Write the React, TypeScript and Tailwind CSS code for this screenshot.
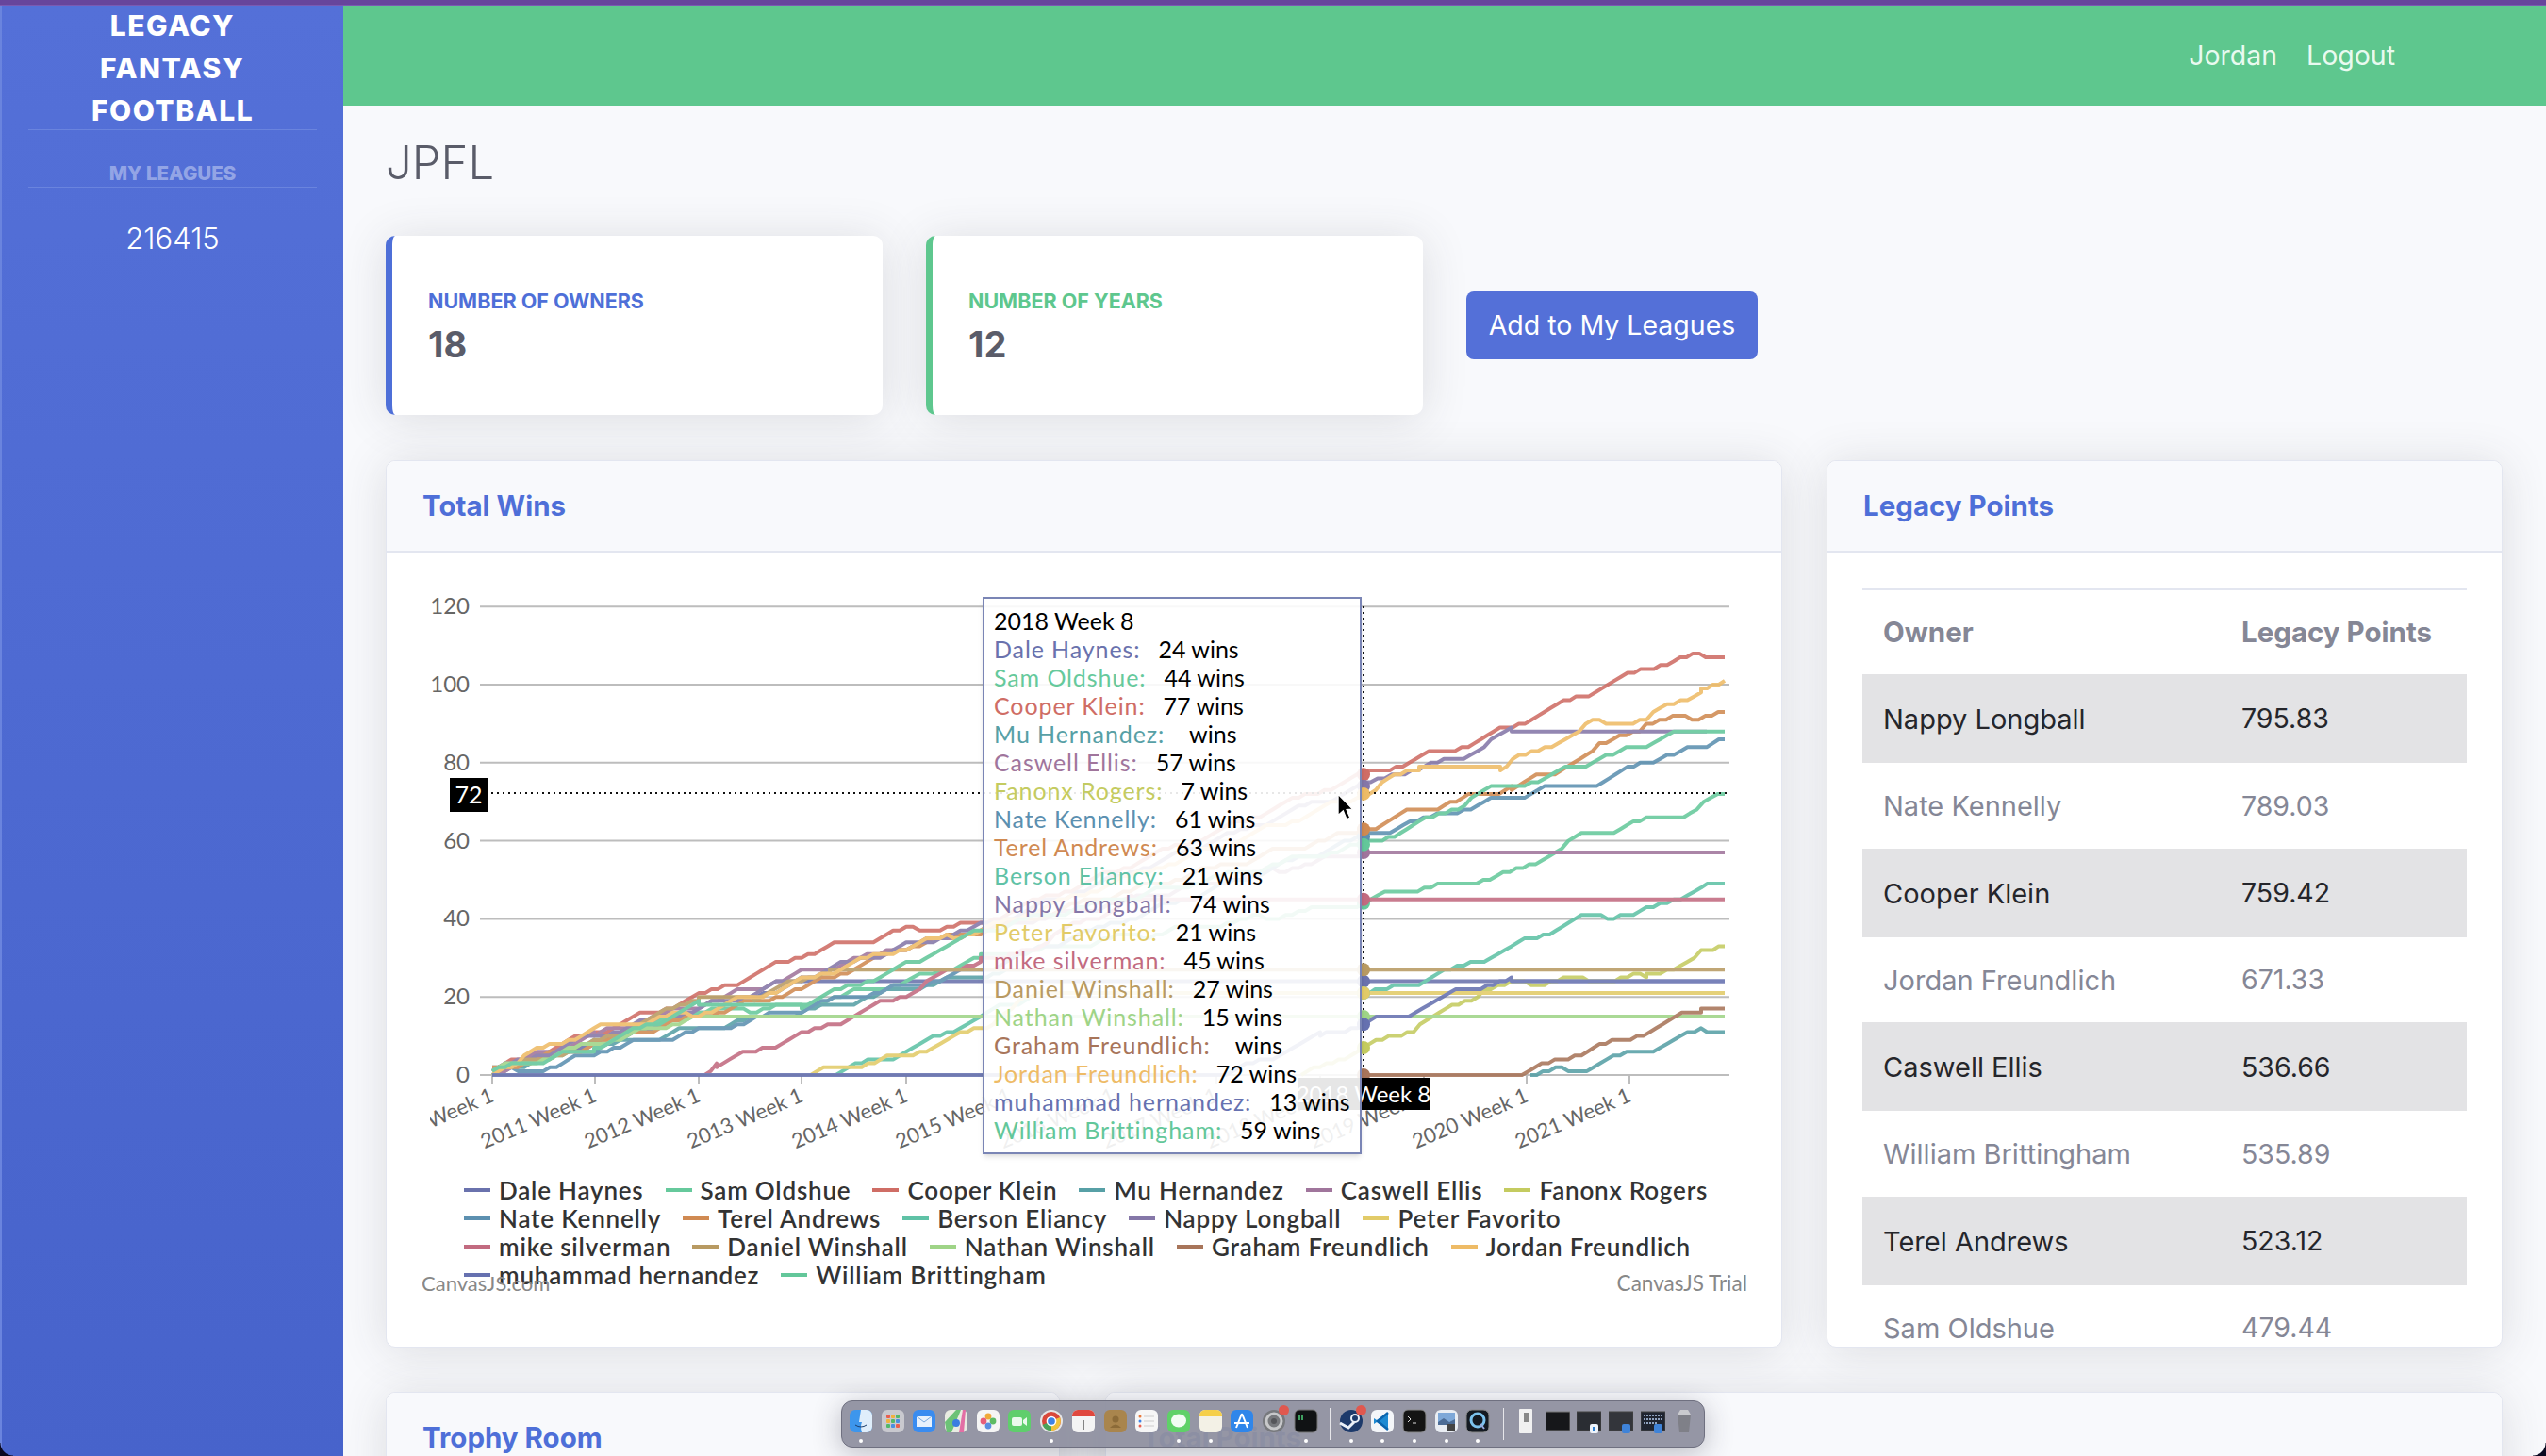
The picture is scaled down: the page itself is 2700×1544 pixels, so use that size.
import { FC, ReactNode } from "react";

type Series = {
  name: string;
  color: string;
  wins: string;
  points: [number, number][];
};

const series: Series[] = [
  { name: "Dale Haynes", color: "#6a72ad", wins: "24", points: [[522, 1], [630, 8], [741, 16], [850, 24], [1829, 24]] },
  { name: "Sam Oldshue", color: "#66c99c", wins: "44", points: [[522, 1], [630, 8], [741, 16], [850, 18], [961, 24], [1040, 30], [1446, 44], [1476, 47], [1545, 49], [1608, 52], [1677, 61], [1746, 65], [1792, 67], [1829, 72]] },
  { name: "Cooper Klein", color: "#cf6d65", wins: "77", points: [[522, 1], [630, 11], [741, 20], [850, 31], [961, 37], [1040, 39], [1446, 77], [1557, 85], [1631, 92], [1712, 101], [1775, 106.5], [1829, 107.5]] },
  { name: "Mu Hernandez", color: "#57a0a6", wins: "", points: [[522, 1], [630, 7], [741, 12], [850, 16], [961, 22], [1040, 26], [1100, 27]] },
  { name: "Caswell Ellis", color: "#a0759c", wins: "57", points: [[522, 1], [630, 10], [741, 18], [850, 26], [961, 33], [1040, 37], [1446, 57], [1829, 57]] },
  { name: "Fanonx Rogers", color: "#c4cb60", wins: "7", points: [[1380, 0], [1446, 7], [1499, 12], [1574, 22], [1631, 24], [1746, 25], [1804, 31], [1829, 33]] },
  { name: "Nate Kennelly", color: "#5c90b0", wins: "61", points: [[522, 1], [590, 2], [630, 6], [741, 11], [850, 17], [961, 23], [1040, 27], [1446, 61], [1488, 64], [1574, 69.5], [1631, 73], [1700, 75], [1746, 80.6], [1804, 84], [1829, 87]] },
  { name: "Terel Andrews", color: "#d08a52", wins: "63", points: [[522, 1], [630, 8], [741, 15], [850, 22], [961, 33], [1040, 37], [1446, 63], [1505, 68], [1551, 70.5], [1603, 74], [1649, 77.5], [1689, 83], [1746, 90], [1829, 93]] },
  { name: "Berson Eliancy", color: "#5fc2a6", wins: "21", points: [[873, 0], [961, 6], [1040, 15], [1100, 21], [1446, 21], [1471, 21.7], [1545, 27], [1603, 33], [1677, 40], [1746, 42], [1804, 48], [1829, 49]] },
  { name: "Nappy Longball", color: "#8577a8", wins: "74", points: [[522, 1], [630, 10], [741, 17], [850, 25], [961, 33], [1040, 38], [1446, 74], [1476, 77], [1545, 81], [1603, 88], [1810, 88]] },
  { name: "Peter Favorito", color: "#e2cb68", wins: "21", points: [[853, 0], [961, 5], [1040, 12], [1100, 21], [1829, 21]] },
  { name: "mike silverman", color: "#c26b80", wins: "45", points: [[741, 0], [760, 3], [850, 10], [961, 21], [1040, 30], [1070, 30], [1200, 45], [1829, 45]] },
  { name: "Daniel Winshall", color: "#b89a62", wins: "27", points: [[522, 1], [630, 8], [741, 20], [800, 20], [850, 24], [880, 27], [1829, 27]] },
  { name: "Nathan Winshall", color: "#9fd487", wins: "15", points: [[522, 1], [630, 8], [741, 15], [1829, 15]] },
  { name: "Graham Freundlich", color: "#a8755a", wins: "", points: [[1446, 0], [1614, 0], [1677, 6], [1729, 9.5], [1804, 17], [1829, 17]] },
  { name: "Jordan Freundlich", color: "#eebb66", wins: "72", points: [[522, 1], [630, 12], [741, 16], [850, 24], [961, 33], [1040, 37], [1446, 72], [1505, 79], [1591, 79], [1631, 83], [1689, 90], [1746, 91], [1804, 99], [1829, 100]] },
  { name: "muhammad hernandez", color: "#6671b0", wins: "13", points: [[522, 0], [1300, 0], [1400, 10], [1446, 13], [1494, 16], [1551, 22], [1603, 24], [1829, 24]] },
  { name: "William Brittingham", color: "#63c79a", wins: "59", points: [[522, 1], [630, 7], [741, 18], [850, 18], [961, 28], [1040, 37], [1446, 59], [1505, 64], [1574, 72.5], [1631, 75.5], [1689, 80.5], [1746, 84.7], [1775, 88], [1829, 88]] },
];

const muTail: [number, number][] = [[1623, 0], [1683, 2], [1746, 6.5], [1804, 11.5], [1829, 12]];

const legendRows = [series.slice(0, 6), series.slice(6, 11), series.slice(11, 16), series.slice(16)];

const yFor = (v: number) => 1140 - v * 4.14;

const stairs = (points: [number, number][], seed: number) => {
  const out: string[] = [];
  for (let i = 0; i < points.length - 1; i++) {
    const [x0, v0] = points[i];
    const [x1, v1] = points[i + 1];
    const steps = Math.max(1, Math.round((x1 - x0) / 6.9));
    for (let s = 0; s <= steps; s++) {
      const t = s / steps;
      const noise = v0 === v1 ? 0 : Math.sin((x0 + s * 6.9) * 0.09 + seed) * 0.7;
      const v = Math.max(0, Math.round(v0 + (v1 - v0) * t + noise));
      out.push(`${(x0 + (x1 - x0) * t).toFixed(1)},${yFor(v).toFixed(1)}`);
    }
  }
  return out.join(" ");
};

const yTicks = [0, 20, 40, 60, 80, 100, 120];
const xTicks = [
  [522, "2010 Week 1"],
  [631, "2011 Week 1"],
  [741, "2012 Week 1"],
  [850, "2013 Week 1"],
  [961, "2014 Week 1"],
  [1071, "2015 Week 1"],
  [1181, "2016 Week 1"],
  [1290, "2017 Week 1"],
  [1400, "2018 Week 1"],
  [1510, "2019 Week 1"],
  [1619, "2020 Week 1"],
  [1728, "2021 Week 1"],
] as const;

const WinsChart = () => (
  <svg viewBox="410 586 1479 661" className="block h-[661px] w-full font-['Lato',sans-serif]">
    <defs>
      <clipPath id="tick-clip">
        <rect x="456" y="1140" width="1400" height="110" />
      </clipPath>
    </defs>
    {yTicks.map((t) => (
      <g key={t}>
        <line x1="509" x2="1834" y1={yFor(t)} y2={yFor(t)} stroke="#bdbdbd" strokeWidth="2" />
        <text x="498" y={yFor(t) + 8} textAnchor="end" fontSize="24" fill="#666">
          {t}
        </text>
      </g>
    ))}
    <g clipPath="url(#tick-clip)">
      {xTicks.map(([x, label]) => (
        <g key={label}>
          <line x1={x} x2={x} y1="1140" y2="1149" stroke="#bdbdbd" strokeWidth="2" />
          <text x={x} y="1168" textAnchor="end" fontSize="22" fill="#666" transform={`rotate(-23 ${x} 1160)`}>
            {label}
          </text>
        </g>
      ))}
    </g>
    <g fill="none" strokeWidth="4" strokeLinejoin="round" opacity="0.88">
      {series.map((s, i) => (
        <polyline key={s.name} points={stairs(s.points, i * 1.7)} stroke={s.color} />
      ))}
      <polyline points={stairs(muTail, 4)} stroke="#57a0a6" />
    </g>
    <line x1="509" x2="1834" y1="841" y2="841" stroke="#111" strokeWidth="2" strokeDasharray="2 4" />
    <line x1="1446" x2="1446" y1="643" y2="1142" stroke="#111" strokeWidth="2" strokeDasharray="2 4" />
    {series
      .filter((s) => s.wins !== "")
      .map((s) => (
        <circle key={s.name} cx="1446" cy={yFor(Number(s.wins))} r="7" fill={s.color} />
      ))}
    <circle cx="1446" cy="1140" r="7" fill="#a8755a" />
    <rect x="477" y="825" width="40" height="36" fill="#000" />
    <text x="497" y="852" textAnchor="middle" fontSize="25" fill="#fff">
      72
    </text>
    <rect x="1376" y="1143" width="141" height="34" fill="#000" />
    <text x="1446" y="1169" textAnchor="middle" fontSize="24" fill="#fff">
      2018 Week 8
    </text>
  </svg>
);

const ChartTooltip = () => (
  <div className="absolute left-[632px] top-[47px] h-[591px] w-[402px] border-2 border-[#7a85b5] bg-white/90 pl-[10px] pt-[8px] font-['Lato',sans-serif] text-[25px] leading-[30px] text-black shadow-md">
    <div>2018 Week 8</div>
    {series.map((s) => (
      <div key={s.name} className="whitespace-pre">
        <span className="tracking-[0.9px]" style={{ color: s.color }}>
          {s.name}:
        </span>
        <span className={s.wins ? "ml-[19px]" : "ml-[26px]"}>{s.wins ? `${s.wins} wins` : "wins"}</span>
      </div>
    ))}
  </div>
);

const Cursor = () => (
  <svg viewBox="0 0 16 28" className="absolute left-[1008px] top-[255px] h-[30px] w-[17px]">
    <path d="M1 1 L1 22 L6 17.5 L9.5 26 L13 24.5 L9.5 16.5 L15.5 16 Z" fill="#000" stroke="#fff" strokeWidth="1.2" />
  </svg>
);

const Card: FC<{ title: string; className: string; children?: ReactNode }> = ({ title, className, children }) => (
  <div className={`overflow-hidden rounded-[10px] border border-[#e3e6f0] bg-white shadow-[0_4px_48px_rgba(58,59,69,0.15)] ${className}`}>
    <div className="flex h-[97px] items-center border-b-2 border-[#e3e6f0] bg-[#f8f9fc] px-[38px]">
      <h6 className="text-[29.5px] font-bold text-[#4e6fd8]">{title}</h6>
    </div>
    {children}
  </div>
);

const StatCard: FC<{ label: string; value: string; border: string; text: string }> = ({ label, value, border, text }) => (
  <div className={`flex h-[190px] w-[527px] flex-col justify-center rounded-[10px] border-l-[7px] bg-white pl-[38px] pt-[5px] shadow-[0_4px_48px_rgba(58,59,69,0.15)] ${border}`}>
    <div className={`text-[21.5px] font-bold uppercase leading-[28px] ${text}`}>{label}</div>
    <div className="mt-[7px] text-[38px] font-bold leading-[50px] text-[#5a5c69]">{value}</div>
  </div>
);

const legacyPoints = [
  ["Nappy Longball", "795.83"],
  ["Nate Kennelly", "789.03"],
  ["Cooper Klein", "759.42"],
  ["Jordan Freundlich", "671.33"],
  ["Caswell Ellis", "536.66"],
  ["William Brittingham", "535.89"],
  ["Terel Andrews", "523.12"],
  ["Sam Oldshue", "479.44"],
];

const LegacyTable = () => (
  <div className="px-[37px] pt-[38px]">
    <table className="w-full border-t-2 border-[#e3e6f0] text-left text-[#858796]">
      <thead>
        <tr className="h-[90px] text-[29.5px]">
          <th className="w-[380px] pl-[22px] font-bold">Owner</th>
          <th className="pl-[22px] font-bold">Legacy Points</th>
        </tr>
      </thead>
      <tbody>
        {legacyPoints.map(([owner, pts], i) => (
          <tr key={owner} className={i % 2 === 0 ? "h-[94px] bg-[#e3e3e5] text-[#25262b]" : "h-[90.6px]"}>
            <td className="pl-[22px] pt-[1.5px] text-[29px]">{owner}</td>
            <td className="pl-[22px] pt-[1.5px] text-[28.5px]">{pts}</td>
          </tr>
        ))}
      </tbody>
    </table>
  </div>
);

const Dot = () => <span className="absolute left-1/2 top-[32px] h-[4px] w-[4px] -translate-x-1/2 rounded-full bg-white" />;

const Badge = () => <span className="absolute -right-[3px] -top-[4px] h-[11px] w-[11px] rounded-full bg-[#e0584f]" />;

const DockIcon: FC<{ dot?: boolean; badge?: boolean; children: ReactNode }> = ({ dot, badge, children }) => (
  <div className="relative h-[26px] w-[26px] shrink-0">
    <svg viewBox="0 0 26 26" className="h-full w-full">
      {children}
    </svg>
    {badge && <Badge />}
    {dot && <Dot />}
  </div>
);

const Tile: FC<{ fill: string }> = ({ fill }) => <rect x="1" y="1" width="24" height="24" rx="6" fill={fill} />;

const Dock = () => (
  <div className="absolute left-[892px] top-[1485px] flex h-[50px] w-[916px] items-start gap-[7.7px] rounded-[12px] border border-[#6f7080] bg-[#8f90a0]/95 pl-[7px] pt-[8px] shadow-[0_6px_30px_rgba(40,40,60,0.3)]">
    <DockIcon dot>
      <rect x="1" y="1" width="24" height="24" rx="6" fill="#3d96ec" />
      <path d="M13 1h6a6 6 0 0 1 6 6v12a6 6 0 0 1-6 6h-5q-2-6 0-11h-3q1-7 2-13z" fill="#dfeefb" />
      <path d="M7 17q6 4 12 0" stroke="#1b3f6e" fill="none" />
    </DockIcon>
    <DockIcon>
      <Tile fill="#c9c9cf" />
      {[6, 11, 16].map((y, r) =>
        [6, 11, 16].map((x, c) => (
          <rect key={`${r}${c}`} x={x} y={y} width="4" height="4" rx="1" fill={["#e85f4f", "#f0b23e", "#54b86a", "#4a8fe0"][(r + c) % 4]} />
        ))
      )}
    </DockIcon>
    <DockIcon>
      <Tile fill="#3a8cf0" />
      <rect x="5" y="8" width="16" height="11" fill="#e8f1fc" />
      <path d="M5 8l8 6 8-6" stroke="#7aa8dc" fill="none" />
    </DockIcon>
    <DockIcon>
      <Tile fill="#e9ece2" />
      <path d="M1 14L13 1h5L8 25H3z" fill="#6cc277" />
      <path d="M16 25l4-24h3L21 25z" fill="#e36fa5" />
      <circle cx="13" cy="15" r="4" fill="#3b7de0" />
    </DockIcon>
    <DockIcon>
      <Tile fill="#f5f5f5" />
      <circle cx="13" cy="8" r="3.4" fill="#f0a93a" />
      <circle cx="18" cy="13" r="3.4" fill="#5dbb63" />
      <circle cx="13" cy="18" r="3.4" fill="#5a8fe0" />
      <circle cx="8" cy="13" r="3.4" fill="#e85f7a" />
    </DockIcon>
    <DockIcon>
      <Tile fill="#5fce6c" />
      <rect x="5" y="9" width="11" height="9" rx="2" fill="#eaf9ec" />
      <path d="M17 12l4-3v9l-4-3z" fill="#eaf9ec" />
    </DockIcon>
    <DockIcon dot>
      <circle cx="13" cy="13" r="12" fill="#e6e6e6" />
      <circle cx="13" cy="13" r="10" fill="#d9483b" />
      <path d="M13 13L3.5 17A10 10 0 0 0 13 23z" fill="#4aa35a" />
      <path d="M13 13L22 9A10 10 0 0 1 13 23z" fill="#f1c33c" />
      <circle cx="13" cy="13" r="4.6" fill="#3f83e6" stroke="#fff" strokeWidth="1.5" />
    </DockIcon>
    <DockIcon>
      <Tile fill="#f4f4f4" />
      <path d="M1 8V7a6 6 0 0 1 6-6h12a6 6 0 0 1 6 6v1z" fill="#e0483e" />
      <rect x="12.5" y="12" width="1.2" height="10" fill="#555" />
    </DockIcon>
    <DockIcon>
      <Tile fill="#a9854d" />
      <circle cx="13" cy="11" r="3.5" fill="#8c6b38" />
      <path d="M7 20q6-7 12 0" fill="#8c6b38" />
    </DockIcon>
    <DockIcon>
      <Tile fill="#f6f6f6" />
      <circle cx="6" cy="8" r="1.5" fill="#e8793c" />
      <circle cx="6" cy="13" r="1.5" fill="#3f83e6" />
      <circle cx="6" cy="18" r="1.5" fill="#e85f4f" />
      <path d="M10 8h11M10 13h11M10 18h11" stroke="#ccc" />
    </DockIcon>
    <DockIcon dot>
      <Tile fill="#5fd168" />
      <ellipse cx="13" cy="12.5" rx="8" ry="7" fill="#f2fcf3" />
    </DockIcon>
    <DockIcon dot>
      <Tile fill="#f3f1e6" />
      <path d="M1 8V7a6 6 0 0 1 6-6h12a6 6 0 0 1 6 6v1z" fill="#f5cf4a" />
    </DockIcon>
    <DockIcon>
      <Tile fill="#2f86ea" />
      <path d="M13 5L7 20M13 5l6 15M5 15h16" stroke="#fff" strokeWidth="2" fill="none" />
    </DockIcon>
    <DockIcon badge>
      <circle cx="13" cy="13" r="12" fill="#77797d" />
      <circle cx="13" cy="13" r="8" fill="none" stroke="#c7c8ca" strokeWidth="3" />
      <circle cx="13" cy="13" r="3" fill="#55565a" />
    </DockIcon>
    <DockIcon dot>
      <rect x="1" y="1" width="24" height="24" rx="5" fill="#101214" stroke="#777" />
      <path d="M6 7v5" stroke="#4fd07a" strokeWidth="1.5" />
      <path d="M9 7v5" stroke="#4fd07a" strokeWidth="1.5" />
    </DockIcon>
    <div className="ml-[4.5px] mr-[1px] h-[34px] w-px shrink-0 -translate-y-[1px] bg-[#e6e6ea]" />
    <DockIcon dot badge>
      <circle cx="13" cy="13" r="12" fill="#1d3a6b" />
      <circle cx="17" cy="10" r="4" fill="none" stroke="#eaf0f8" strokeWidth="2" />
      <path d="M1 15l9 5 6-6" stroke="#eaf0f8" strokeWidth="3" fill="none" />
    </DockIcon>
    <DockIcon dot>
      <Tile fill="#f4f6f9" />
      <path d="M19 4v18l-12-8-3 2 0-6 3 2z" fill="#1f8ad2" />
      <path d="M19 4L8 13l11 9" fill="none" stroke="#0c64ad" strokeWidth="2.5" />
    </DockIcon>
    <DockIcon dot>
      <rect x="1" y="1" width="24" height="24" rx="5" fill="#141414" stroke="#888" />
      <path d="M6 8l3 3-3 3M11 15h4" stroke="#ddd" fill="none" />
    </DockIcon>
    <DockIcon dot>
      <Tile fill="#e9edf3" />
      <rect x="4" y="4" width="18" height="10" fill="#7ea8d8" />
      <path d="M4 14l6-4 6 4 6-3v6H4z" fill="#4b6b95" />
      <rect x="14" y="16" width="8" height="8" fill="#444" />
    </DockIcon>
    <DockIcon dot>
      <rect x="1" y="1" width="24" height="24" rx="6" fill="#141a22" stroke="#888" />
      <circle cx="13" cy="12" r="7" fill="none" stroke="#7cc3ee" strokeWidth="3" />
      <path d="M16 16l4 5" stroke="#9ad" strokeWidth="2" />
    </DockIcon>
    <div className="ml-[6px] mr-[2.2px] h-[34px] w-px shrink-0 -translate-y-[1px] bg-[#e6e6ea]" />
    <DockIcon>
      <rect x="6" y="0" width="14" height="26" rx="1" fill="#f1f1f1" />
      <rect x="11" y="4" width="5" height="10" fill="#888" />
    </DockIcon>
    <DockIcon>
      <rect x="0" y="3" width="26" height="20" fill="#16171a" stroke="#777" />
    </DockIcon>
    <DockIcon>
      <rect x="0" y="3" width="26" height="20" fill="#2a2d33" stroke="#444" />
      <rect x="14" y="16" width="9" height="10" rx="2" fill="#eef3fa" />
      <rect x="17" y="19" width="3" height="4" fill="#2d7fd0" />
    </DockIcon>
    <DockIcon>
      <rect x="0" y="3" width="26" height="20" fill="#33353b" stroke="#444" />
      <rect x="14" y="16" width="9" height="10" rx="2" fill="#3f83d8" />
    </DockIcon>
    <DockIcon>
      <rect x="0" y="3" width="26" height="20" fill="#1f2430" stroke="#444" />
      <path d="M3 7h20M3 11h20M3 15h14" stroke="#8fa3c0" strokeWidth="2" strokeDasharray="2 1" />
      <rect x="14" y="16" width="9" height="10" rx="2" fill="#3f83d8" />
    </DockIcon>
    <DockIcon>
      <path d="M6 6h14l-2 19H8z" fill="#7f8088" />
      <path d="M6 6l3-5h8l3 5z" fill="#c9cace" />
    </DockIcon>
  </div>
);

export default function App() {
  return (
    <div className="relative h-[1544px] overflow-hidden bg-[#f8f9fc] font-['Inter',sans-serif]">
      <div className="h-[6px] border-b border-[#7b5ab2] bg-[#67459c]" />
      <div className="flex h-[1538px]">
        <aside className="w-[364px] shrink-0 border-l-2 border-[#6a84de] bg-gradient-to-b from-[#5470d8] to-[#4763cb] text-center">
          <div className="-mt-[1.5px] h-[132px] text-[30px] font-extrabold uppercase leading-[45px] tracking-[0.05em] text-white">
            <div>Legacy</div>
            <div>Fantasy</div>
            <div>Football</div>
          </div>
          <div className="mx-[28px] border-t border-[#6a84de]" />
          <div className="pb-[3px] pt-[34px] text-[20.5px] font-extrabold uppercase leading-[23px] text-white/40">My Leagues</div>
          <div className="mx-[28px] border-t border-[#6a84de]" />
          <div className="mt-[34px] text-[31px] font-light leading-[40px] text-white">216415</div>
        </aside>
        <main className="min-w-0 flex-1">
          <header className="flex h-[106px] items-center justify-end gap-[31px] bg-[#5ec78e] pr-[160px] text-[28.5px] text-[#e8faf0]">
            <span>Jordan</span>
            <span>Logout</span>
          </header>
          <div className="pl-[45px] pr-[46px]">
            <h1 className="pt-[31px] text-[49px] font-light leading-[60px] text-[#5a5c69]">JPFL</h1>
            <div className="mt-[47px] flex items-center gap-[46px]">
              <StatCard label="Number of Owners" value="18" border="border-[#4e6fd8]" text="text-[#4e6fd8]" />
              <StatCard label="Number of Years" value="12" border="border-[#5ec78e]" text="text-[#5ec78e]" />
              <button className="h-[72px] w-[309px] rounded-[8px] bg-[#5470d8] text-[28.5px] text-white">Add to My Leagues</button>
            </div>
            <div className="mt-[48px] flex gap-[47px]">
              <Card title="Total Wins" className="h-[941px] w-[1481px] shrink-0">
                <div className="relative">
                  <WinsChart />
                  <div className="flex flex-col pl-[82px] font-['Lato',sans-serif] text-[26px] font-semibold leading-[30px] text-[#333]">
                    {legendRows.map((row, r) => (
                      <div key={r} className="flex h-[30px] items-center gap-[23px]">
                        {row.map((s) => (
                          <div key={s.name} className="flex items-center gap-[9px] whitespace-nowrap tracking-[0.8px]">
                            <span className="h-[4px] w-[28px]" style={{ backgroundColor: s.color }} />
                            {s.name}
                          </div>
                        ))}
                      </div>
                    ))}
                  </div>
                  <span className="absolute left-[37px] top-[761px] font-['Lato',sans-serif] text-[22px] leading-[28px] text-[#888]">CanvasJS.com</span>
                  <span className="absolute right-[36px] top-[761px] font-['Lato',sans-serif] text-[22.5px] leading-[28px] text-[#888]">CanvasJS Trial</span>
                  <ChartTooltip />
                  <Cursor />
                </div>
              </Card>
              <Card title="Legacy Points" className="h-[941px] flex-1">
                <LegacyTable />
              </Card>
            </div>
            <div className="mt-[47px] flex gap-[48px]">
              <Card title="Trophy Room" className="h-[300px] w-[715px] shrink-0" />
              <Card title="Total Points" className="h-[300px] flex-1" />
            </div>
          </div>
        </main>
      </div>
      <Dock />
      <div className="absolute bottom-0 left-0 h-[14px] w-[14px] bg-[radial-gradient(circle_at_100%_0,transparent_13px,#0a0820_14px)]" />
      <div className="absolute bottom-0 right-0 h-[14px] w-[14px] bg-[radial-gradient(circle_at_0_0,transparent_13px,#0a0820_14px)]" />
    </div>
  );
}
